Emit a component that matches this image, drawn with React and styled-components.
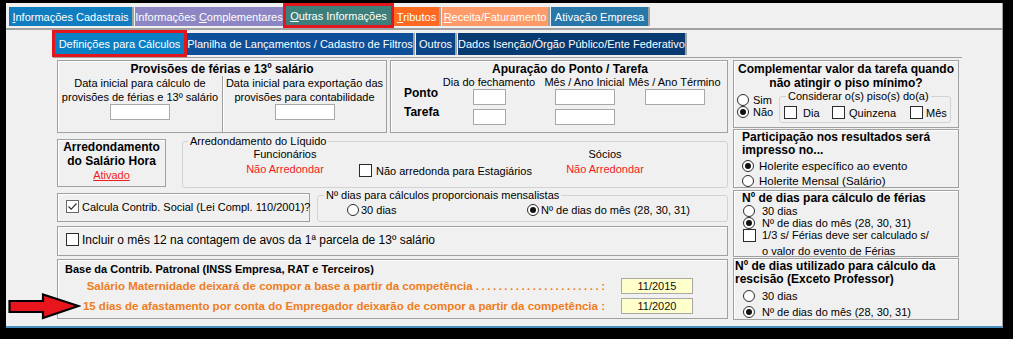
import React from 'react'
import styled, { createGlobalStyle } from 'styled-components'

const GlobalStyle = createGlobalStyle`
  html, body {
    margin: 0;
    padding: 0;
    background: #000;
  }
  body {
    font-family: "Liberation Sans", Arial, sans-serif;
    font-size: 11px;
    color: #000;
  }
  * { box-sizing: border-box; }
`

const Screen = styled.div`
  position: relative;
  width: 1013px;
  height: 339px;
  padding: 3px 0 0 6px;
  background: #000;
`

const Panel = styled.div`
  width: 997px;
  height: 325px;
  background: #f0f0f0;
  border-right: 1px solid #a0a0a0;
  border-bottom: 2px solid #4b8fc1;
  display: flex;
  flex-direction: column;
  overflow: hidden;
`

const TabRow = styled.div`
  flex: none;
  display: flex;
  align-items: flex-end;
  height: ${p => p.$h}px;
  padding-left: ${p => p.$pl}px;
  border-bottom: ${p => (p.$line ? '2px solid #a0a0a0' : '0')};
`

const Tab = styled.div`
  flex: none;
  display: flex;
  align-items: center;
  justify-content: center;
  width: ${p => p.$w}px;
  height: ${p => p.$h}px;
  margin-bottom: ${p => (p.$active ? 0 : 2)}px;
  margin-right: ${p => (p.$sep ? 1 : 0)}px;
  background: ${p => p.$bg};
  color: #fff;
  white-space: nowrap;
  border: ${p => (p.$active ? '3px solid #e3161d' : '0')};
  border-right: ${p => (p.$active ? '3px solid #e3161d' : p.$sep ? '2px solid #a3a3a3' : '0')};
`

const Sheet = styled.div`
  flex: 1;
  margin-left: 47px;
  width: 909px;
  border-top: 1px solid #a0a0a0;
  display: flex;
  gap: 5px;
  padding-left: 4px;
`

const Column = styled.div`
  flex: none;
  width: ${p => p.$w}px;
  display: flex;
  flex-direction: column;
`

const Row = styled.div`
  display: flex;
  align-items: flex-start;
  margin-top: ${p => p.$mt || 0}px;
`

const Box = styled.div`
  flex: none;
  width: ${p => (p.$w ? `${p.$w}px` : '100%')};
  height: ${p => p.$h}px;
  margin-top: ${p => p.$mt || 0}px;
  margin-left: ${p => p.$ml || 0}px;
  padding: ${p => p.$pad || '0'};
  border: 1px solid #a0a0a0;
  box-shadow: inset 1px 1px 0 #fff;
`

const Title = styled.div`
  font-weight: bold;
  font-size: ${p => p.$fs || 12}px;
  line-height: ${p => p.$lh || 13}px;
  text-align: ${p => p.$align || 'center'};
  padding: ${p => p.$pad || '0'};
  white-space: nowrap;
`

const Group = styled.fieldset`
  flex: none;
  margin: ${p => p.$mt || 0}px 0 0 ${p => p.$ml || 0}px;
  padding: 0;
  min-width: 0;
  width: ${p => p.$w}px;
  height: ${p => p.$h}px;
  border: 1px solid #d2d2d2;
  border-radius: 3px;
`

const Legend = styled.legend`
  margin-left: ${p => p.$ml}px;
  padding: 0 2px;
  font-size: 11px;
  line-height: 12px;
  white-space: nowrap;
`

const Split = styled.div`
  display: grid;
  grid-template-columns: 164px 1fr;
  height: 56px;
`

const SplitCol = styled.div`
  display: flex;
  flex-direction: column;
  align-items: center;
  text-align: center;
  line-height: 14px;
  white-space: nowrap;
  border-left: ${p => (p.$divider ? '1px solid #a0a0a0' : '0')};
  box-shadow: ${p => (p.$divider ? 'inset 1px 0 0 #fff' : 'none')};
`

const Field = styled.input`
  flex: none;
  width: ${p => p.$w}px;
  height: 16px;
  margin: ${p => p.$m || 0};
  padding: 0;
  border: 1px solid #a8a8a8;
  background: ${p => (p.$yellow ? '#ffffcc' : '#fff')};
  font: 11px "Liberation Sans", Arial, sans-serif;
  color: #111;
  text-align: center;
  outline: none;
`

const PontoGrid = styled.div`
  display: grid;
  grid-template-columns: 47px 102px 89px 91px;
  grid-template-rows: 12px 16px 16px;
  align-items: center;
  justify-items: center;
  line-height: 12px;
  white-space: nowrap;
  & > :nth-child(n + 5) { margin-top: 2px; }
  & > :nth-child(n + 9) { margin-top: 10px; }
`

const RowLabel = styled.div`
  justify-self: start;
  padding-left: 13px;
  font-weight: bold;
  font-size: 12px;
  margin-top: ${p => (p.$up ? '-6px' : '0')} !important;
`

const Option = styled.label`
  flex: none;
  display: flex;
  align-items: ${p => p.$align || 'center'};
  gap: ${p => (p.$gap === undefined ? 4 : p.$gap)}px;
  width: ${p => (p.$w ? `${p.$w}px` : 'auto')};
  height: ${p => (p.$h ? `${p.$h}px` : 'auto')};
  margin: ${p => p.$m || 0};
  font-size: ${p => p.$fs || 11}px;
  line-height: 12px;
  white-space: nowrap;
`

const Radio = styled.span`
  flex: none;
  width: 12px;
  height: 12px;
  border-radius: 50%;
  border: 1px solid #2b2b2b;
  background: #fff;
  display: flex;
  align-items: center;
  justify-content: center;
  &::after {
    content: '';
    width: 6px;
    height: 6px;
    border-radius: 50%;
    background: ${p => (p.$on ? '#111' : 'transparent')};
  }
`

const CheckBox = styled.span`
  flex: none;
  width: 13px;
  height: 13px;
  border: 1px solid ${p => (p.$on ? '#666' : '#2b2b2b')};
  background: #fff;
  display: flex;
  align-items: center;
  justify-content: center;
`

const Check = ({ on }) => (
  <CheckBox $on={on}>
    {on && (
      <svg width="11" height="11" viewBox="0 0 11 11">
        <polyline points="1.5,5.5 4.2,8.2 9.5,2.5" fill="none" stroke="#333" strokeWidth="1.2" />
      </svg>
    )}
  </CheckBox>
)

const Stack = styled.div`
  flex: none;
  width: ${p => p.$w}px;
  margin-left: ${p => p.$ml || 0}px;
  text-align: center;
  line-height: 15px;
  white-space: nowrap;
`

const Red = styled.div`
  color: #f01c1c;
  text-decoration: ${p => (p.$u ? 'underline' : 'none')};
`

const Inline = styled.div`
  display: flex;
  align-items: ${p => p.$align || 'flex-start'};
  padding: ${p => p.$pad || '0'};
`

const Options = styled.div`
  flex: none;
  width: ${p => (p.$w ? `${p.$w}px` : 'auto')};
  padding: ${p => p.$pad || '0'};
  display: flex;
  flex-direction: column;
`

const Line = styled.div`
  line-height: 12px;
  padding-left: ${p => p.$pl || 0}px;
  margin-top: ${p => p.$mt || 0}px;
  white-space: nowrap;
`

const RateRow = styled.div`
  display: flex;
  align-items: center;
  height: 16px;
  margin-top: ${p => p.$mt || 0}px;
`

const RateLabel = styled.div`
  flex: 0 0 547px;
  text-align: right;
  color: #ef7d22;
  font-weight: bold;
  font-size: 11.5px;
  white-space: nowrap;
`

const Dots = styled.span`
  letter-spacing: 2.5px;
`

const Arrow = styled.svg`
  position: absolute;
  left: 8px;
  top: 293px;
`

const topTabs = [
  { w: 125, bg: '#117dc1', sep: true, label: <><u>I</u>nformações Cadastrais</> },
  { w: 148, bg: '#8c86c4', label: <>Informações <u>C</u>omplementares</> },
  { w: 111, bg: '#3d7f7b', active: true, label: <><u>O</u>utras Informações</> },
  { w: 47, bg: '#ff6a21', sep: true, label: <><u>T</u>ributos</> },
  { w: 108, bg: '#ff9b68', sep: true, label: <><u>R</u>eceita/Faturamento</> },
  { w: 99, bg: '#2778a8', sep: true, label: 'Ativação Empresa' },
]

const subTabs = [
  { w: 135, bg: '#0a80c4', active: true, label: 'Definições para Cálculos' },
  { w: 228, bg: '#0d4f99', sep: true, label: 'Planilha de Lançamentos / Cadastro de Filtros' },
  { w: 41, bg: '#0c4488', sep: true, label: 'Outros' },
  { w: 229, bg: '#063a70', sep: true, label: 'Dados Isenção/Órgão Público/Ente Federativo' },
]

export default function App() {
  return (
    <Screen>
      <GlobalStyle />
      <Panel>
        <TabRow $h={27} $pl={3} $line>
          {topTabs.map((t, i) => (
            <Tab key={i} $w={t.w} $h={t.active ? 25 : 19} $bg={t.bg} $active={t.active} $sep={t.sep}>
              <span>{t.label}</span>
            </Tab>
          ))}
        </TabRow>
        <TabRow $h={27} $pl={46}>
          {subTabs.map((t, i) => (
            <Tab key={i} $w={t.w} $h={t.active ? 27 : 22} $bg={t.bg} $active={t.active} $sep={t.sep}>
              <span>{t.label}</span>
            </Tab>
          ))}
        </TabRow>
        <Sheet>
          <Column $w={671}>
            <Row $mt={2}>
              <Box $w={330} $h={73}>
                <Title $pad="2px 0 0">Provisões de férias e 13º salário</Title>
                <Split>
                  <SplitCol>
                    <div>Data inicial para cálculo de</div>
                    <div>provisões de férias e 13º salário</div>
                    <Field $w={60} readOnly />
                  </SplitCol>
                  <SplitCol $divider>
                    <div>Data inicial para exportação das</div>
                    <div>provisões para contabilidade</div>
                    <Field $w={60} readOnly />
                  </SplitCol>
                </Split>
              </Box>
              <Box $w={338} $h={73} $ml={3}>
                <Title $pad="2px 0 0 22px">Apuração do Ponto / Tarefa</Title>
                <PontoGrid>
                  <span />
                  <span>Dia do fechamento</span>
                  <span>Mês / Ano Inicial</span>
                  <span>Mês / Ano Término</span>
                  <RowLabel $up>Ponto</RowLabel>
                  <Field $w={33} readOnly />
                  <Field $w={60} readOnly />
                  <Field $w={60} readOnly />
                  <RowLabel>Tarefa</RowLabel>
                  <Field $w={33} readOnly />
                  <Field $w={60} readOnly />
                  <span />
                </PontoGrid>
              </Box>
            </Row>

            <Row $mt={2}>
              <Box $w={109} $h={48} $mt={4}>
                <Title $lh={14}>Arredondamento</Title>
                <Title $lh={14}>do Salário Hora</Title>
                <Stack $w={107}>
                  <Red $u>Ativado</Red>
                </Stack>
              </Box>
              <Group $w={546} $h={53} $ml={16}>
                <Legend $ml={5}>Arredondamento do Líquido</Legend>
                <Inline $align="flex-end">
                  <Stack $w={110} $ml={47}>
                    <div>Funcionários</div>
                    <Red>Não Arredondar</Red>
                  </Stack>
                  <Option $w={172} $h={15} $m="0 0 -1px 19px">
                    <Check />
                    Não arredonda para Estagiários
                  </Option>
                  <Stack $w={110} $ml={19}>
                    <div>Sócios</div>
                    <Red>Não Arredondar</Red>
                  </Stack>
                </Inline>
              </Group>
            </Row>

            <Row $mt={1}>
              <Box $w={253} $h={29} $mt={4} $pad="6px 0 0 8px">
                <Option $gap={3}>
                  <Check on />
                  Calcula Contrib. Social (Lei Compl. 110/2001)?
                </Option>
              </Box>
              <Group $w={411} $h={33} $ml={7}>
                <Legend $ml={6}>Nº dias para cálculos proporcionais mensalistas</Legend>
                <Inline $pad="3px 0 0 29px">
                  <Option $w={180} $gap={2}>
                    <Radio />
                    30 dias
                  </Option>
                  <Option $gap={2}>
                    <Radio $on />
                    Nº de dias do mês (28, 30, 31)
                  </Option>
                </Inline>
              </Group>
            </Row>

            <Box $h={30} $mt={4} $pad="6px 0 0 8px">
              <Option $gap={3} $fs={12}>
                <Check />
                Incluir o mês 12 na contagem de avos da 1ª parcela de 13º salário
              </Option>
            </Box>

            <Box $h={60} $mt={3}>
              <Title $fs={11} $lh={14} $align="left" $pad="2px 0 0 7px">
                Base da Contrib. Patronal (INSS Empresa, RAT e Terceiros)
              </Title>
              <RateRow $mt={2}>
                <RateLabel>
                  Salário Maternidade deixará de compor a base a partir da competência <Dots>......................</Dots>:
                </RateLabel>
                <Field $w={72} $m="0 0 0 16px" $yellow readOnly value="11/2015" />
              </RateRow>
              <RateRow $mt={4}>
                <RateLabel>
                  15 dias de afastamento por conta do Empregador deixarão de compor a partir da competência :
                </RateLabel>
                <Field $w={72} $m="0 0 0 16px" $yellow readOnly value="11/2020" />
              </RateRow>
            </Box>
          </Column>

          <Column $w={226}>
            <Box $h={68} $mt={2}>
              <Title $lh={14} $pad="1px 0 0">
                Complementar valor da tarefa quando
              </Title>
              <Title $lh={14}>não atingir o piso mínimo?</Title>
              <Inline>
                <Options $w={45} $pad="4px 0 0 3px">
                  <Option $h={12} $gap={4}>
                    <Radio />
                    Sim
                  </Option>
                  <Option $h={12} $gap={4}>
                    <Radio $on />
                    Não
                  </Option>
                </Options>
                <Group $w={172} $h={33}>
                  <Legend $ml={6}>Considerar o(s) piso(s) do(a)</Legend>
                  <Inline $pad="4px 0 0 4px">
                    <Option $w={48} $gap={6}>
                      <Check />
                      Dia
                    </Option>
                    <Option $w={78} $gap={4}>
                      <Check />
                      Quinzena
                    </Option>
                    <Option $gap={3}>
                      <Check />
                      Mês
                    </Option>
                  </Inline>
                </Group>
              </Inline>
            </Box>

            <Box $h={59} $mt={1}>
              <Title $align="left" $pad="1px 0 0 8px">
                Participação nos resultados será
              </Title>
              <Title $align="left" $pad="0 0 0 8px">
                impresso no...
              </Title>
              <Options $pad="1px 0 0 8px">
                <Option $h={15} $gap={5} $fs={11.5}>
                  <Radio $on />
                  Holerite específico ao evento
                </Option>
                <Option $h={15} $gap={5} $fs={11.5}>
                  <Radio />
                  Holerite Mensal (Salário)
                </Option>
              </Options>
            </Box>

            <Box $h={67} $mt={2}>
              <Title $align="left" $pad="1px 0 0 8px">
                Nº de dias para cálculo de férias
              </Title>
              <Options $pad="0 0 0 9px">
                <Option $h={12} $gap={7}>
                  <Radio />
                  30 dias
                </Option>
                <Option $h={11} $gap={7}>
                  <Radio $on />
                  Nº de dias do mês (28, 30, 31)
                </Option>
                <Option $align="flex-start" $gap={6} $m="1px 0 0">
                  <Check />
                  <Line>1/3 s/ Férias deve ser calculado s/</Line>
                </Option>
                <Line $pl={19} $mt={3}>o valor do evento de Férias</Line>
              </Options>
            </Box>

            <Box $h={62} $mt={1}>
              <Title $align="left" $pad="1px 0 0 1px">
                Nº de dias utilizado para cálculo da
              </Title>
              <Title $align="left" $pad="0 0 0 1px">
                rescisão (Exceto Professor)
              </Title>
              <Options $pad="2px 0 0 9px">
                <Option $h={16} $gap={7}>
                  <Radio />
                  30 dias
                </Option>
                <Option $h={16} $gap={7}>
                  <Radio $on />
                  Nº de dias do mês (28, 30, 31)
                </Option>
              </Options>
            </Box>
          </Column>
        </Sheet>
      </Panel>
      <Arrow width="73" height="27" viewBox="0 0 73 27">
        <polygon
          points="1.5,8 35,8 35,1.5 70.5,13 35,25 35,19 1.5,19"
          fill="#e8151d"
          stroke="#000"
          strokeWidth="2.2"
          strokeLinejoin="miter"
        />
      </Arrow>
    </Screen>
  )
}
